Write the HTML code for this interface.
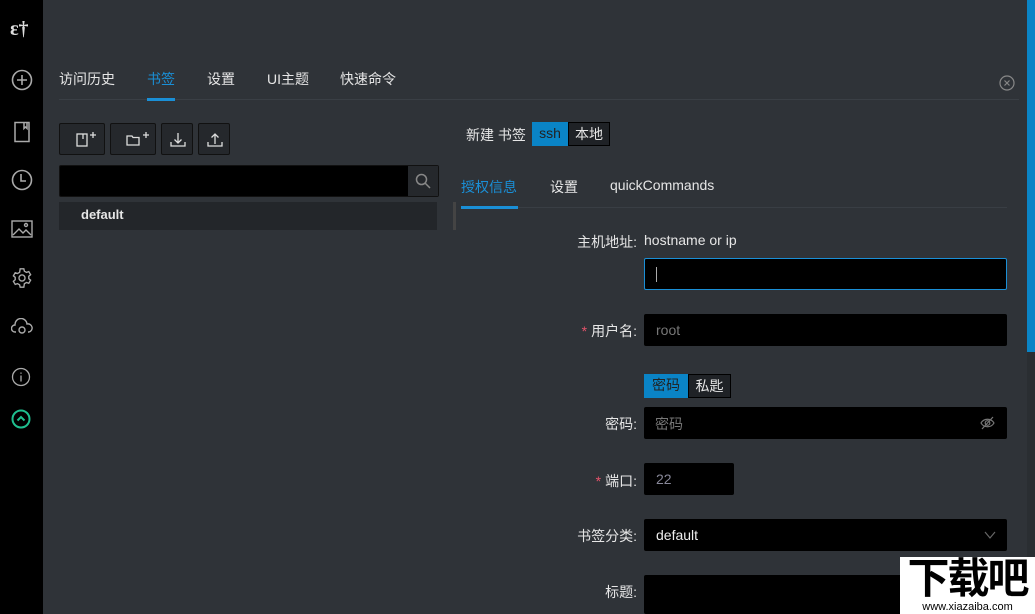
<!DOCTYPE html>
<html><head><meta charset="utf-8"><style>
*{box-sizing:border-box;margin:0;padding:0}
body{width:1035px;height:614px;overflow:hidden;background:#2f3338;font-family:"Liberation Sans","Noto Sans CJK SC",sans-serif;font-size:14px;color:#e6e6e6;position:relative}
.a{position:absolute}
.side{left:0;top:0;width:43px;height:614px;background:#000}
.ic{position:absolute;left:11px}
.tab{position:absolute;top:69px;font-size:14px}
.btn{position:absolute;top:123px;height:32px;border:1px solid #111;background:#25282c;border-radius:2px}
.inp{position:absolute;background:#000;border-radius:2px}
.lbl{position:absolute;text-align:right;width:100px;font-size:14px}
.req{color:#e4536b;margin-right:4px}
</style></head><body>
<div class="a side">
<div class="ic" style="top:18px;color:#ddd;font-size:20px;font-weight:bold;font-family:'Liberation Serif',serif;left:10px">ɛ†</div>
<svg class="ic" style="top:69px" width="22" height="22" viewBox="0 0 22 22" fill="none" stroke="#aaa" stroke-width="1.6"><circle cx="11" cy="11" r="9.5"/><path d="M11 6v10M6 11h10"/></svg>
<svg class="ic" style="top:121px" width="22" height="22" viewBox="0 0 22 22" fill="none" stroke="#aaa" stroke-width="1.5"><path d="M4 1.5h14v19H4z M13 1.5v6l1.5-1.5 1.5 1.5v-6"/></svg>
<svg class="ic" style="top:169px" width="22" height="22" viewBox="0 0 22 22" fill="none" stroke="#aaa" stroke-width="1.6"><circle cx="11" cy="11" r="9.5"/><path d="M10 5v7h5"/></svg>
<svg class="ic" style="top:220px" width="22" height="18" viewBox="0 0 22 18" fill="none" stroke="#aaa" stroke-width="1.4"><rect x="1" y="1" width="20" height="16"/><path d="M2 15l6-6 4 4 3-3 5 5"/><circle cx="15" cy="5" r="1.5"/></svg>
<svg class="ic" style="top:267px" width="22" height="22" viewBox="0 0 24 24" fill="none" stroke="#aaa" stroke-width="1.5"><path d="M10 2h4l.6 2.6 2.3 1.3 2.5-.9 2 3.4-2 1.7v2.6l2 1.7-2 3.4-2.5-.9-2.3 1.3L14 22h-4l-.6-2.6-2.3-1.3-2.5.9-2-3.4 2-1.7v-2.6l-2-1.7 2-3.4 2.5.9 2.3-1.3z"/><circle cx="12" cy="12" r="3.3"/></svg>
<svg class="ic" style="top:318px" width="22" height="18" viewBox="0 0 22 18" fill="none" stroke="#aaa" stroke-width="1.4"><path d="M5 14H4a3.5 3.5 0 0 1 0-7 6 6 0 0 1 12-1 4 4 0 0 1 2 8h-1"/><circle cx="11" cy="12" r="3"/></svg>
<svg class="ic" style="top:367px" width="20" height="20" viewBox="0 0 20 20" fill="none" stroke="#aaa" stroke-width="1.3"><circle cx="10" cy="10" r="8.5"/><path d="M10 8.5v6M10 5.5v1.3"/></svg>
<svg class="ic" style="top:409px" width="20" height="20" viewBox="0 0 20 20" fill="none" stroke="#1fbf8f" stroke-width="2"><circle cx="10" cy="10" r="8.5"/><path d="M6.5 11.5L10 8l3.5 3.5"/></svg>
</div>

<div class="tab" style="left:59px">访问历史</div>
<div class="tab" style="left:147px;color:#1a8fd6">书签</div>
<div class="tab" style="left:207px">设置</div>
<div class="tab" style="left:267px">UI主题</div>
<div class="tab" style="left:340px">快速命令</div>
<div class="a" style="left:59px;top:99px;width:960px;height:1px;background:#3a3f45"></div>
<div class="a" style="left:147px;top:98px;width:28px;height:3px;background:#1a8fd6"></div>
<svg class="a" style="left:999px;top:75px" width="16" height="16" viewBox="0 0 16 16" fill="none" stroke="#888" stroke-width="1.2"><circle cx="8" cy="8" r="7"/><path d="M5.5 5.5l5 5M10.5 5.5l-5 5"/></svg>

<div class="btn" style="left:59px;width:46px"><svg class="a" style="left:14px;top:7px" width="26" height="16" fill="none" stroke="#ddd" stroke-width="1.3"><rect x="3" y="3" width="10" height="12"/><path d="M9 3v5M19 1v6M16 4h6"/></svg></div>
<div class="btn" style="left:110px;width:46px"><svg class="a" style="left:14px;top:7px" width="26" height="16" fill="none" stroke="#ddd" stroke-width="1.3"><path d="M2 5h5l1 1.5h6V14H2z"/><path d="M21 1v6M18 4h6"/></svg></div>
<div class="btn" style="left:161px;width:32px"><svg class="a" style="left:7px;top:7px" width="18" height="18" fill="none" stroke="#ddd" stroke-width="1.3"><path d="M9 2v10M5.5 8.5L9 12l3.5-3.5M2 11v4h14v-4"/></svg></div>
<div class="btn" style="left:198px;width:32px"><svg class="a" style="left:7px;top:7px" width="18" height="18" fill="none" stroke="#ddd" stroke-width="1.3"><path d="M9 13V3M5.5 6.5L9 3l3.5 3.5M2 11v4h14v-4"/></svg></div>

<div class="inp" style="left:59px;top:165px;width:380px;height:32px;border:1px solid #111"></div>
<div class="a" style="left:408px;top:166px;width:30px;height:30px;background:#25282c"><svg class="a" style="left:7px;top:7px" width="16" height="16" fill="none" stroke="#888" stroke-width="1.5"><circle cx="6.5" cy="6.5" r="5"/><path d="M10 10l5 5"/></svg></div>
<div class="a" style="left:59px;top:202px;width:378px;height:28px;background:#23262a;font-weight:bold;padding:5px 0 0 22px;font-size:13px">default</div>
<div class="a" style="left:453px;top:202px;width:3px;height:28px;background:#444"></div>

<div class="a" style="left:466px;top:125px">新建 书签</div>
<div class="a" style="left:532px;top:122px;width:36px;height:24px;background:#0a84c6;text-align:center;line-height:23px;color:#222">ssh</div>
<div class="a" style="left:568px;top:122px;width:42px;height:24px;background:#1f2226;border:1px solid #000;text-align:center;line-height:22px">本地</div>

<div class="a" style="left:461px;top:177px;color:#1a8fd6">授权信息</div>
<div class="a" style="left:550px;top:177px">设置</div>
<div class="a" style="left:610px;top:177px">quickCommands</div>
<div class="a" style="left:461px;top:207px;width:546px;height:1px;background:#393e44"></div>
<div class="a" style="left:461px;top:206px;width:57px;height:3px;background:#1a8fd6"></div>

<div class="lbl" style="left:537px;top:232px">主机地址:</div>
<div class="a" style="left:644px;top:232px">hostname or ip</div>
<div class="inp" style="left:644px;top:258px;width:363px;height:32px;border:1px solid #1a8fd6"><div class="a" style="left:11px;top:8px;width:1px;height:15px;background:#aaa"></div></div>

<div class="lbl" style="left:537px;top:321px"><span class="req">*</span>用户名:</div>
<div class="inp" style="left:644px;top:314px;width:363px;height:32px;color:#777;padding:8px 12px">root</div>

<div class="a" style="left:644px;top:374px;width:44px;height:24px;background:#0a84c6;text-align:center;line-height:23px;color:#222">密码</div>
<div class="a" style="left:688px;top:374px;width:43px;height:24px;background:#1f2226;border:1px solid #000;text-align:center;line-height:22px">私匙</div>

<div class="lbl" style="left:537px;top:414px">密码:</div>
<div class="inp" style="left:644px;top:407px;width:363px;height:32px;color:#777;padding:7px 11px">密码<svg class="a" style="left:336px;top:9px" width="15" height="14" fill="none" stroke="#777" stroke-width="1.2"><path d="M1 7c3-5 10-5 13 0-3 5-10 5-13 0z"/><circle cx="7.5" cy="7" r="2.3"/><path d="M2 13L13 1"/></svg></div>

<div class="lbl" style="left:537px;top:471px"><span class="req">*</span>端口:</div>
<div class="inp" style="left:644px;top:463px;width:90px;height:32px;color:#889;padding:8px 12px">22</div>

<div class="lbl" style="left:537px;top:526px">书签分类:</div>
<div class="inp" style="left:644px;top:519px;width:363px;height:32px;padding:8px 12px;color:#eee">default<svg class="a" style="left:340px;top:12px" width="12" height="8" fill="none" stroke="#666" stroke-width="1.2"><path d="M1 1l5 6 5-6"/></svg></div>

<div class="lbl" style="left:537px;top:582px">标题:</div>
<div class="inp" style="left:644px;top:575px;width:363px;height:39px"></div>

<div class="a" style="left:1027px;top:0;width:8px;height:614px;background:#2a2e32"></div>
<div class="a" style="left:1027px;top:0;width:8px;height:352px;background:#0a84c6"></div>

<div class="a" style="left:900px;top:557px;width:135px;height:57px;background:#fff;color:#000;text-align:center">
<div style="font-size:42px;font-weight:bold;line-height:44px;letter-spacing:-2px">下载吧</div>
<div style="font-size:11px;line-height:12px">www.xiazaiba.com</div></div>
</body></html>
